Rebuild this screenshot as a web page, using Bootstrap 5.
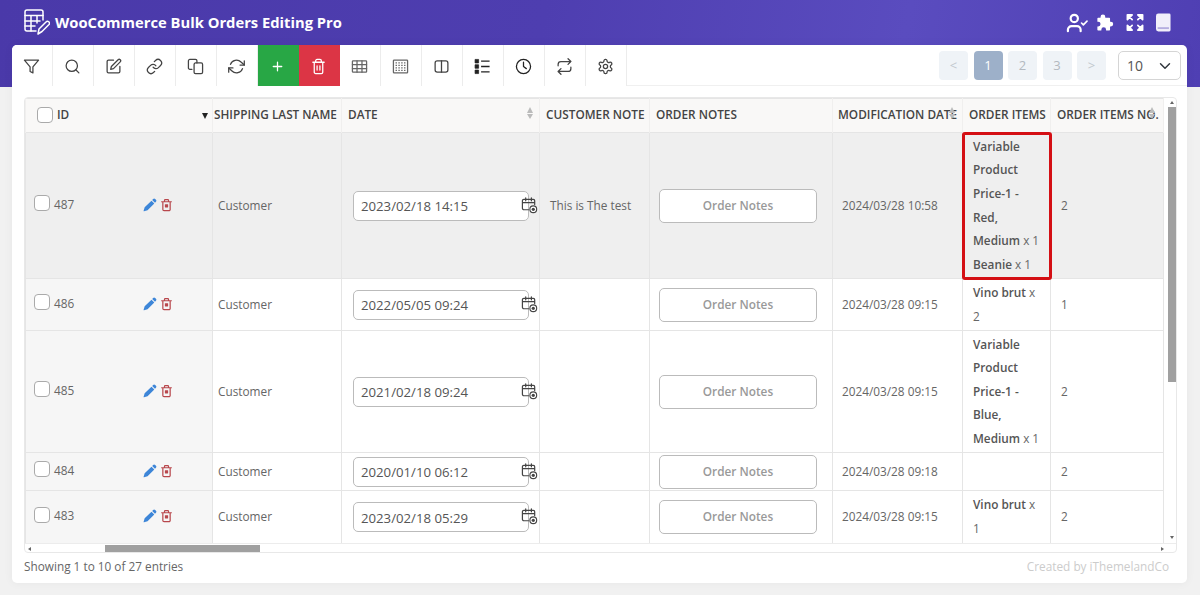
<!DOCTYPE html>
<html lang="en">
<head>
<meta charset="utf-8">
<title>WooCommerce Bulk Orders Editing Pro</title>
<link href="https://cdn.jsdelivr.net/npm/bootstrap@5.3.0/dist/css/bootstrap.min.css" rel="stylesheet">
<style>
html,body{height:595px;overflow:hidden}
body{font-family:"Open Sans",sans-serif;font-size:12px;color:#666;background:#f1f1f1}
.pg-wrap{height:595px;background:linear-gradient(100deg,#4a39a9 0%,#4e3eb0 45%,#5a4cbf 75%,#4f3fb3 100%) top/100% 87px no-repeat}
.top-h{height:45px;padding:0 29px 0 24px}
.top-h h1{font-size:14.75px;font-weight:700;color:#fff;margin:0 0 0 5px;font-family:"Open Sans",sans-serif}
.top-ic{gap:7px}
.main-c{margin:0 13px 0 12px;height:538px;border:0;border-radius:5px;background:#fff;box-shadow:0 0 10px rgba(0,0,0,.05);overflow:hidden}
.tool-r{height:41px;border-bottom:1px solid #f0f0f0}
.tb{width:41px;height:41px;border:0;border-right:1px solid #ececec;border-radius:0;padding:0 1px 2px 0;background:#fff;color:#444}
.tb svg{width:17px;height:17px;fill:none;stroke:currentColor;stroke-width:1.800;stroke-linecap:round;stroke-linejoin:round}
.tb.g{background:#28a745;color:#fff;border-right-color:#28a745}
.tb.r{background:#dc3545;color:#fff;border-right-color:#dc3545}
.tb.dk{color:#222}
.tb.lt{color:#666}
.pgn{gap:5.500px;padding:6px 6px 0 0}
.pb{width:29px;height:29px;padding:0;border:0;border-radius:4px;background:#eff3f7;color:#b3b9c0;font-size:13px;line-height:29px;text-align:center}
.pb.on{background:#9db0c9;color:#fff}
.pb.nav-b{color:#c2c8ce}
.form-select.per{width:63px;height:29px;margin-left:6.500px;padding:0 0 0 8px;font-size:14px;color:#555;border-color:#d5d5d5;border-radius:5px;background-position:right 7px center}
.t-wrap{margin:11px 10px 0 12px;height:456px;border:1px solid #e8e8e8;border-radius:4px;overflow:hidden}
.t-top{height:445px}
.t-clip{width:1139px;flex:none;overflow:hidden}
.t-gap{width:4px;flex:none}
.vb{width:8px;flex:none;color:#777}
.vb i{flex:1 1 auto;display:block}
.arr{display:block;width:0;height:0;border-style:solid}
.arr.u{border-width:0 2.500px 3px;border-color:transparent transparent #666;margin:3px auto 3px}
.arr.d{border-width:3px 2.500px 0;border-color:#666 transparent transparent;margin:0 auto 4px}
.arr.l{border-width:2.500px 3px 2.500px 0;border-color:transparent #666 transparent transparent;margin:0 0 0 3px}
.arr.rr{border-width:2.500px 0 2.500px 3px;border-color:transparent transparent transparent #666;margin:0 12px 0 0}
.vb b{display:block;width:8px;height:275px;background:#a0a0a0}
.hb{height:10px;border-top:1px solid #ececec;align-items:center}
.hb b{display:block;width:155px;height:8px;background:#a0a0a0;margin-left:74px}
.table.ot{width:1138px;table-layout:fixed;margin:0;border-collapse:collapse;--bs-table-border-color:#e5e5e5;color:#666}
.table.ot>thead>tr>th{height:34px;padding:0 6px 2px;background:#f9f8f7;font-size:11.800px;font-weight:600;color:#444;vertical-align:middle;white-space:nowrap;overflow:hidden;border-color:#f0efee;border-bottom-color:#e8e8e8;position:relative;text-transform:uppercase}
.table.ot>thead>tr>th.sl{padding-left:1px}
.table.ot>thead>tr>th.md{padding-left:5px}
.table.ot>tbody>tr>td{padding:0 10px;vertical-align:middle;background:#fff;color:#666;font-size:11.800px;line-height:23.600px}
.table.ot>tbody>tr>td.idc{background:#f6f6f6;padding:0 0 0 8px}
.table.ot>tbody>tr>td.cu{padding-left:5px}
.table.ot>tbody>tr>td.mdc{padding-left:9px}
.table.ot>tbody>tr>td.itc{padding-right:3px}
.table.ot>tbody>tr>td.nb-td{padding-left:9px}
.table.ot>tbody>tr.hi>td,.table.ot>tbody>tr.hi>td.idc{background:#efefef}
.table.ot>tbody>tr>td.mark-red{outline:3px solid #d40f14;outline-offset:-2px;border-radius:2px}
.form-check-input.cb{width:16px;height:16px;margin:0 4px 0 0;border:1px solid #aaa;border-radius:4px;float:none}
.table.ot>tbody .cb{margin-top:-5px}
.table.ot th .cb{margin-left:3px}
.rid{margin-top:-2px}
.act{margin-left:auto;margin-right:39px;gap:3px;align-items:center;margin-top:-2px}
.act svg{display:block}
.s1{position:absolute;right:4px;top:14px;width:0;height:0;border-left:3.500px solid transparent;border-right:3.500px solid transparent;border-top:6px solid #222}
.sa{position:absolute;top:8px;width:6px}
.sa::before,.sa::after{content:"";display:block;width:0;height:0;border-left:3px solid transparent;border-right:3px solid transparent}
.sa::before{border-bottom:6px solid #bbb;margin-bottom:1px}
.sa::after{border-top:5px solid #bbb}
.dw{position:relative;width:176px;margin-left:1px}
.form-control.dti{height:30px;padding:1px 7px 0;font-size:13.200px;color:#555;border:1px solid #bbb;border-radius:5px;background:#fff;line-height:1}
.cal{position:absolute;right:-9px;top:6px;color:#444}
.btn.nb{width:158px;height:34px;padding:0;background:#fff;border:1px solid #bbb;border-radius:5px;font-size:11.800px;font-weight:600;color:#999}
strong.it{font-weight:600;color:#555}
.foot-r{padding:5px 18px 0 12px;font-size:11.800px;color:#666}
.foot-r .cr{color:#ccc}
</style>
</head>
<body>
<svg width="0" height="0" class="d-none">
<symbol id="pen" viewBox="0 0 16 16"><path fill="#3d86d8" d="M11.600 1.200a1.600 1.600 0 0 1 2.300 0l.9.9a1.600 1.600 0 0 1 0 2.300L13.700 5.500 10.500 2.300zM9.700 3.100l3.200 3.200-7.700 7.700-4 1.200a.4.400 0 0 1-.5-.5l1.200-4z"/></symbol>
<symbol id="bin" viewBox="0 0 16 16"><path fill="none" stroke="#b8474c" stroke-width="1.500" stroke-linejoin="round" stroke-linecap="round" d="M2 4h12M5.500 4V2.500a1 1 0 0 1 1-1h3a1 1 0 0 1 1 1V4M3.500 4v9.500a1.500 1.500 0 0 0 1.500 1.500h6a1.500 1.500 0 0 0 1.500-1.500V4"/><rect x="6" y="7" width="4" height="4" rx=".5" fill="#b8474c"/></symbol>
<symbol id="cal" viewBox="0 0 18 18"><path fill="none" stroke="#444" stroke-width="1.300" stroke-linecap="round" d="M8 13.500H3a1.500 1.500 0 0 1-1.500-1.500V4A1.500 1.500 0 0 1 3 2.500h10A1.500 1.500 0 0 1 14.500 4v4M1.500 6h13M5 1v3M11 1v3"/><circle cx="13" cy="13" r="3.600" fill="#fff" stroke="#444" stroke-width="1.200"/><circle cx="13" cy="13" r="1.700" fill="#444"/></symbol>
</svg>
<div class="pg-wrap">
  <header class="top-h d-flex align-items-center justify-content-between">
    <div class="d-flex align-items-center">
      <svg width="26" height="27" viewBox="0 0 26 27" fill="none" stroke="#fff" stroke-width="1.500" stroke-linecap="round" stroke-linejoin="round"><path d="M12 22H3a2 2 0 0 1-2-2V3a2 2 0 0 1 2-2h14a2 2 0 0 1 2 2v8"/><path d="M1 6.500h18M1 12h15M1 17h10M7 6.500V22M13 6.500V14"/><path d="M14 25l1-5 7-7a1.800 1.800 0 0 1 3 2.500l-7 7z" fill="#4a39a9"/></svg>
      <h1>WooCommerce Bulk Orders Editing Pro</h1>
    </div>
    <div class="d-flex align-items-center top-ic">
      <svg width="22" height="20" viewBox="0 0 24 22" fill="none" stroke="#fff" stroke-width="2.400" stroke-linecap="round" stroke-linejoin="round"><path d="M16 20v-1.500a4 4 0 0 0-4-4H6a4 4 0 0 0-4 4V20"/><circle cx="9" cy="6" r="4"/><path d="M17 11l2 2 4-4" stroke-width="1.800"/></svg>
      <svg width="19" height="19" viewBox="0 0 24 24" fill="#fff"><path d="M10 2a3 3 0 0 1 3 3v1h5a1 1 0 0 1 1 1v4h1a3 3 0 0 1 0 6h-1v4a1 1 0 0 1-1 1h-4v-1a3 3 0 0 0-6 0v1H4a1 1 0 0 1-1-1v-4h1a3 3 0 0 0 0-6H3V7a1 1 0 0 1 1-1h3V5a3 3 0 0 1 3-3z"/></svg>
      <svg width="20" height="19" class="ms-1" viewBox="0 0 20 20" fill="#fff" stroke="#fff" stroke-width="1.800" stroke-linecap="round" stroke-linejoin="round"><path d="M2 7V2h5zM2 2l5 5M18 7V2h-5zM18 2l-5 5M2 13v5h5zM2 18l5-5M18 13v5h-5zM18 18l-5-5"/></svg>
      <svg width="15" height="19" class="ms-1" viewBox="0 0 16 19"><path fill="#f1effa" d="M2.500 0H14a1.500 1.500 0 0 1 1.500 1.500v16A1.500 1.500 0 0 1 14 19H2.500A2.500 2.500 0 0 1 0 16.500v-14A2.500 2.500 0 0 1 2.500 0z"/><rect x="1.800" y="14.500" width="12" height="2" fill="#b5aee0"/></svg>
    </div>
  </header>

  <main class="card main-c">
    <div class="tool-r d-flex justify-content-between">
      <div class="d-flex">
        <button class="btn tb"><svg viewBox="0 0 24 24"><polygon points="22 3 2 3 10 12.460 10 19 14 21 14 12.460 22 3"/></svg></button>
        <button class="btn tb"><svg viewBox="0 0 24 24"><circle cx="11" cy="11" r="8"/><path d="M21 21l-4.350-4.350"/></svg></button>
        <button class="btn tb"><svg viewBox="0 0 24 24"><path d="M12 3H5a2 2 0 0 0-2 2v14a2 2 0 0 0 2 2h14a2 2 0 0 0 2-2v-7"/><path d="M18.500 2.500a2.120 2.120 0 0 1 3 3L12 15l-4 1 1-4z"/></svg></button>
        <button class="btn tb"><svg viewBox="0 0 24 24"><path d="M10 13a5 5 0 0 0 7.540.54l3-3a5 5 0 0 0-7.070-7.070l-1.720 1.710"/><path d="M14 11a5 5 0 0 0-7.540-.54l-3 3a5 5 0 0 0 7.070 7.070l1.710-1.710"/></svg></button>
        <button class="btn tb"><svg viewBox="0 0 24 24"><path d="M7 16H4a2 2 0 0 1-2-2V4a2 2 0 0 1 2-2h8a2 2 0 0 1 2 2v3"/><rect x="10" y="7" width="12" height="15" rx="2"/></svg></button>
        <button class="btn tb"><svg viewBox="0 0 24 24"><path d="M23 4v6h-6M1 20v-6h6"/><path d="M3.510 9a9 9 0 0 1 14.850-3.360L23 10M1 14l4.640 4.360A9 9 0 0 0 20.490 15"/></svg></button>
        <button class="btn tb g"><svg viewBox="0 0 24 24"><path d="M12 6v12M6 12h12"/></svg></button>
        <button class="btn tb r"><svg viewBox="0 0 24 24"><path d="M4 6h16M8 6V4a2 2 0 0 1 2-2h4a2 2 0 0 1 2 2v2M18 6v14a2 2 0 0 1-2 2H8a2 2 0 0 1-2-2V6M10 11v6M14 11v6"/></svg></button>
        <button class="btn tb lt"><svg viewBox="0 0 24 24" stroke-width="1.500"><rect x="2" y="4" width="20" height="16" rx="1"/><path d="M2 9.500h20M2 15h20M8.500 4v16M15.500 4v16"/></svg></button>
        <button class="btn tb lt"><svg viewBox="0 0 24 24" stroke-width="1.400"><rect x="2" y="3" width="20" height="18" rx="1"/><path d="M5 7h14M5 10.500h14M5 14h14M5 17.500h14" stroke-dasharray="2 2" stroke-linecap="butt"/></svg></button>
        <button class="btn tb"><svg viewBox="0 0 24 24"><rect x="3" y="4" width="18" height="16" rx="3"/><path d="M12 4v16"/></svg></button>
        <button class="btn tb dk"><svg viewBox="0 0 24 24" stroke-width="2.500"><path d="M10 4.500h12M10 12h12M10 19.500h12" stroke-linecap="butt"/><path fill="currentColor" stroke-width="1" stroke-linecap="butt" d="M1.500 2h5v5h-5zM1.500 9.500h5v5h-5zM1.500 17h5v5h-5z"/></svg></button>
        <button class="btn tb dk"><svg viewBox="0 0 24 24" stroke-width="2.600"><circle cx="12" cy="12" r="10"/><path d="M12 6v6l4 3"/></svg></button>
        <button class="btn tb"><svg viewBox="0 0 24 24"><path d="M17 1l4 4-4 4M3 11V9a4 4 0 0 1 4-4h14M7 23l-4-4 4-4M21 13v2a4 4 0 0 1-4 4H3"/></svg></button>
        <button class="btn tb"><svg viewBox="0 0 24 24" stroke-width="1.700"><path d="M12.220 2h-.44a2 2 0 0 0-2 2v.18a2 2 0 0 1-1 1.730l-.43.25a2 2 0 0 1-2 0l-.15-.08a2 2 0 0 0-2.730.73l-.22.38a2 2 0 0 0 .73 2.730l.15.1a2 2 0 0 1 1 1.720v.51a2 2 0 0 1-1 1.740l-.15.09a2 2 0 0 0-.73 2.730l.22.38a2 2 0 0 0 2.730.73l.15-.08a2 2 0 0 1 2 0l.43.25a2 2 0 0 1 1 1.730V20a2 2 0 0 0 2 2h.44a2 2 0 0 0 2-2v-.18a2 2 0 0 1 1-1.730l.43-.25a2 2 0 0 1 2 0l.15.08a2 2 0 0 0 2.730-.73l.22-.39a2 2 0 0 0-.73-2.730l-.15-.08a2 2 0 0 1-1-1.740v-.5a2 2 0 0 1 1-1.740l.15-.09a2 2 0 0 0 .73-2.730l-.22-.38a2 2 0 0 0-2.730-.73l-.15.08a2 2 0 0 1-2 0l-.43-.25a2 2 0 0 1-1-1.730V4a2 2 0 0 0-2-2z"/><circle cx="12" cy="12" r="3"/></svg></button>
      </div>
      <div class="d-flex pgn">
        <span class="pb nav-b">&lt;</span><span class="pb on">1</span><span class="pb">2</span><span class="pb">3</span><span class="pb nav-b">&gt;</span>
        <select class="form-select per"><option>10</option></select>
      </div>
    </div>

    <div class="t-wrap">
      <div class="t-top d-flex">
        <div class="t-clip">
          <table class="table table-bordered ot">
            <colgroup><col style="width:187px"><col style="width:129px"><col style="width:198px"><col style="width:110px"><col style="width:183px"><col style="width:130px"><col style="width:88px"><col style="width:113px"></colgroup>
            <thead><tr>
              <th class="ps-2"><div class="d-flex align-items-center"><input class="form-check-input cb" type="checkbox">ID</div><span class="s1"></span></th>
              <th class="sl">Shipping Last Name</th>
              <th>Date<span class="sa" style="right:6px"></span></th>
              <th>Customer Note</th>
              <th>Order Notes</th>
              <th class="md">Modification Date<span class="sa" style="right:7px"></span></th>
              <th>Order Items</th>
              <th>Order Items No.<span class="sa" style="right:8px"></span></th>
            </tr></thead>
            <tbody>
              <tr class="hi" style="height:146px">
                <td class="idc"><div class="d-flex align-items-center"><input class="form-check-input cb" type="checkbox"><span class="rid">487</span><div class="d-flex act"><svg width="14" height="14"><use href="#pen"/></svg><svg width="13" height="14"><use href="#bin"/></svg></div></div></td>
                <td class="cu">Customer</td>
                <td><div class="dw"><input class="form-control dti" value="2023/02/18 14:15"><svg class="cal" width="17" height="17"><use href="#cal"/></svg></div></td>
                <td>This is The test</td>
                <td class="nb-td"><button class="btn nb">Order Notes</button></td>
                <td class="mdc">2024/03/28 10:58</td>
                <td class="mark-red itc"><strong class="it">Variable<br>Product<br>Price-1 -<br>Red,<br>Medium</strong> x 1<br><strong class="it">Beanie</strong> x 1</td>
                <td>2</td>
              </tr>
              <tr style="height:52px">
                <td class="idc"><div class="d-flex align-items-center"><input class="form-check-input cb" type="checkbox"><span class="rid">486</span><div class="d-flex act"><svg width="14" height="14"><use href="#pen"/></svg><svg width="13" height="14"><use href="#bin"/></svg></div></div></td>
                <td class="cu">Customer</td>
                <td><div class="dw"><input class="form-control dti" value="2022/05/05 09:24"><svg class="cal" width="17" height="17"><use href="#cal"/></svg></div></td>
                <td></td>
                <td class="nb-td"><button class="btn nb">Order Notes</button></td>
                <td class="mdc">2024/03/28 09:15</td>
                <td class="itc"><strong class="it">Vino brut</strong> x<br>2</td>
                <td>1</td>
              </tr>
              <tr style="height:122px">
                <td class="idc"><div class="d-flex align-items-center"><input class="form-check-input cb" type="checkbox"><span class="rid">485</span><div class="d-flex act"><svg width="14" height="14"><use href="#pen"/></svg><svg width="13" height="14"><use href="#bin"/></svg></div></div></td>
                <td class="cu">Customer</td>
                <td><div class="dw"><input class="form-control dti" value="2021/02/18 09:24"><svg class="cal" width="17" height="17"><use href="#cal"/></svg></div></td>
                <td></td>
                <td class="nb-td"><button class="btn nb">Order Notes</button></td>
                <td class="mdc">2024/03/28 09:15</td>
                <td class="itc"><strong class="it">Variable<br>Product<br>Price-1 -<br>Blue,<br>Medium</strong> x 1</td>
                <td>2</td>
              </tr>
              <tr style="height:38px">
                <td class="idc"><div class="d-flex align-items-center"><input class="form-check-input cb" type="checkbox"><span class="rid">484</span><div class="d-flex act"><svg width="14" height="14"><use href="#pen"/></svg><svg width="13" height="14"><use href="#bin"/></svg></div></div></td>
                <td class="cu">Customer</td>
                <td><div class="dw"><input class="form-control dti" value="2020/01/10 06:12"><svg class="cal" width="17" height="17"><use href="#cal"/></svg></div></td>
                <td></td>
                <td class="nb-td"><button class="btn nb">Order Notes</button></td>
                <td class="mdc">2024/03/28 09:18</td>
                <td class="itc"></td>
                <td>2</td>
              </tr>
              <tr style="height:53px">
                <td class="idc"><div class="d-flex align-items-center"><input class="form-check-input cb" type="checkbox"><span class="rid">483</span><div class="d-flex act"><svg width="14" height="14"><use href="#pen"/></svg><svg width="13" height="14"><use href="#bin"/></svg></div></div></td>
                <td class="cu">Customer</td>
                <td><div class="dw"><input class="form-control dti" value="2023/02/18 05:29"><svg class="cal" width="17" height="17"><use href="#cal"/></svg></div></td>
                <td></td>
                <td class="nb-td"><button class="btn nb">Order Notes</button></td>
                <td class="mdc">2024/03/28 09:15</td>
                <td class="itc"><strong class="it">Vino brut</strong> x<br>1</td>
                <td>2</td>
              </tr>
            </tbody>
          </table>
        </div>
        <div class="t-gap"></div>
        <div class="vb d-flex flex-column"><span class="arr u"></span><b></b><i></i><span class="arr d"></span></div>
      </div>
      <div class="hb d-flex"><span class="arr l"></span><b></b><span class="ms-auto arr rr"></span></div>
    </div>

    <div class="foot-r d-flex justify-content-between">
      <span>Showing 1 to 10 of 27 entries</span>
      <span class="cr">Created by iThemelandCo</span>
    </div>
  </main>
</div>
<script src="https://cdn.jsdelivr.net/npm/bootstrap@5.3.0/dist/js/bootstrap.bundle.min.js"></script>
</body>
</html>
